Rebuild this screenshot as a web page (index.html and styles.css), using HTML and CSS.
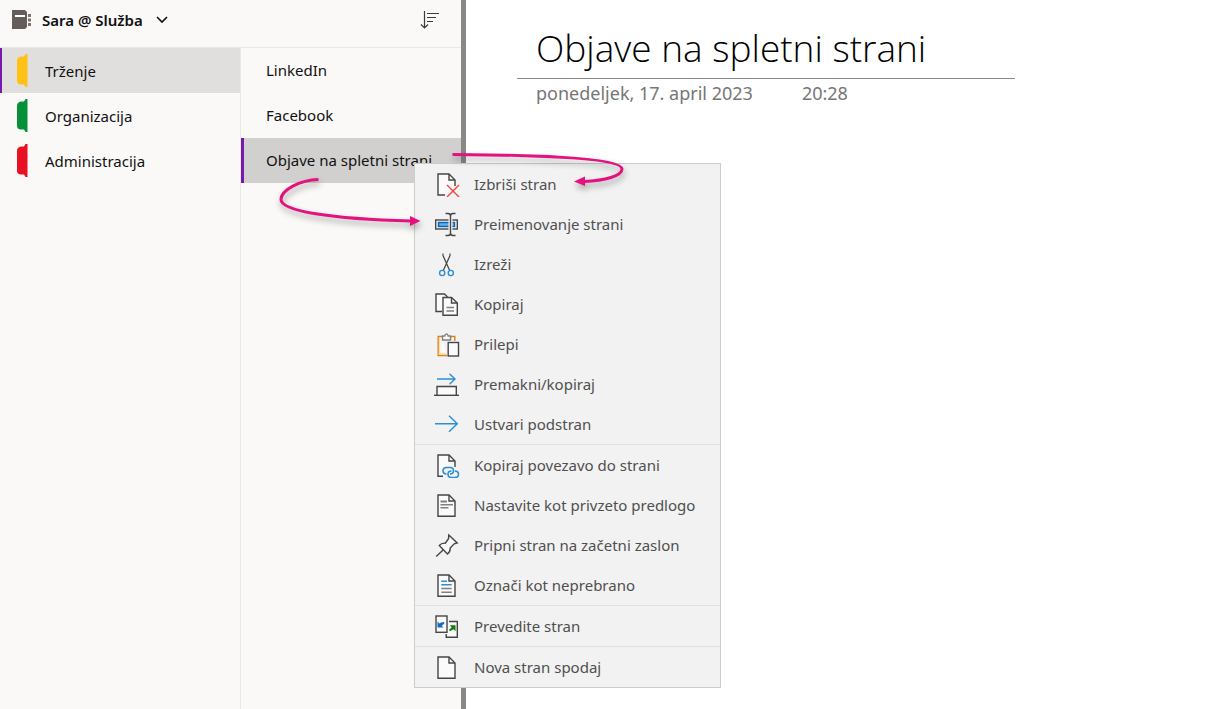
FILE: index.html
```html
<!DOCTYPE html>
<html lang="sl">
<head>
  <meta charset="UTF-8">
  <meta name="viewport" content="width=device-width, initial-scale=1.0">
  <title>Objave na spletni strani</title>
  <link rel="stylesheet" href="styles.css">
</head>
<body>
  <div class="app">
    <aside class="sidebar">
      <header class="sidebar-header">
        <button class="notebook">
          <svg width="20" height="20" viewBox="0 0 20 20">
            <path d="M0 0h13l2 2v15l-2 2H0z" fill="#655d59"/>
            <path d="M3 6h10" stroke="#fff" stroke-width="2"/>
            <path d="M16 5.500h3M16 10h3M16 14.500h3" stroke="#7a736f" stroke-width="3"/>
          </svg>
          <span>Sara @ Služba</span>
          <svg class="chevron" width="12" height="8" viewBox="0 0 12 8">
            <path d="M1 1l5 5 5-5" fill="none" stroke="#111" stroke-width="1.6"/>
          </svg>
        </button>
        <button class="sort" aria-label="Razvrsti">
          <svg width="20" height="20" viewBox="0 0 20 20" fill="none" stroke="#3b3b3b" stroke-width="1.2">
            <path d="M4.500 1v17M1 14.500l3.500 3.500 3.500-3.500M7 3.500h12M7 7.500h9M7 11.500h6"/>
          </svg>
        </button>
      </header>
      <div class="columns">
        <nav class="sections">
          <button class="section active">
            <svg class="tab yellow" width="11" height="33" viewBox="0 0 11 33"><path d="M10.500 0v33H8.500L7 30.500H4Q0 30.500 0 26.500V7Q0 3 4 2.500H7L8.500 0z"/></svg>
            Trženje
          </button>
          <button class="section">
            <svg class="tab green" width="11" height="33" viewBox="0 0 11 33"><path d="M10.500 0v33H8.500L7 30.500H4Q0 30.500 0 26.500V7Q0 3 4 2.500H7L8.500 0z"/></svg>
            Organizacija
          </button>
          <button class="section">
            <svg class="tab red" width="11" height="33" viewBox="0 0 11 33"><path d="M10.500 0v33H8.500L7 30.500H4Q0 30.500 0 26.500V7Q0 3 4 2.500H7L8.500 0z"/></svg>
            Administracija
          </button>
        </nav>
        <nav class="pages">
          <button class="page">LinkedIn</button>
          <button class="page">Facebook</button>
          <button class="page active">Objave na spletni strani</button>
        </nav>
      </div>
    </aside>

    <main class="note">
      <div class="note-header">
        <h1>Objave na spletni strani</h1>
        <p class="date"><span>ponedeljek, 17. april 2023</span><span>20:28</span></p>
      </div>
    </main>

    <div class="menu">
      <div class="group">
        <button class="item">
          <svg class="icon" viewBox="0 0 26 26">
            <path class="paper" d="M11 24H4V3h11l6 6v6"/><path d="M15 3v6h6"/>
            <path class="cross" d="M13 14l12 12M25 14L13 26"/>
          </svg>
          Izbriši stran
        </button>
        <button class="item">
          <svg class="icon" viewBox="0 0 26 26">
            <rect class="paper" x="1.700" y="9" width="21.600" height="9"/>
            <rect x="4.500" y="11.500" width="16" height="4" fill="#69afe5" stroke="#0a64b4" stroke-width="1.500"/>
            <path d="M16.500 3v21" stroke="#f2f2f2" stroke-width="4"/>
            <path d="M11.500 2.500h2.500q2.500 0 2.500 2.500v17q0 2.500-2.500 2.500h-2.500M21.500 2.500h-2.500q-2.500 0-2.500 2.500v17q0 2.500 2.500 2.500h2.500"/>
          </svg>
          Preimenovanje strani
        </button>
        <button class="item">
          <svg class="icon" viewBox="0 0 26 26">
            <path d="M9 2.500v2l6.800 15.300M16 2.500v2L9.200 19.800" stroke-width="1.200"/>
            <g class="blue"><circle cx="8.200" cy="22" r="2.600"/><circle cx="16.800" cy="22" r="2.600"/></g>
          </svg>
          Izreži
        </button>
        <button class="item">
          <svg class="icon" viewBox="0 0 26 26">
            <path class="paper" d="M8 20.500H2V3h8.500l3 3"/>
            <path class="paper" d="M9 6.500h8.500L23.300 12v12.300H9z"/><path d="M17.500 6.500V12h5.800"/>
            <path class="gray" d="M12.500 16.500H20M12.500 20H20"/>
          </svg>
          Kopiraj
        </button>
        <button class="item">
          <svg class="icon" viewBox="0 0 26 26">
            <path class="orange" d="M8 5.500H4.200v19H13M16.500 5.500h4.300V10"/>
            <path d="M5.500 7v16H12" fill="none" stroke="#f8dda6"/>
            <path class="gray paper" d="M8.500 9V5h2.300q.4-2 1.700-2t1.700 2h2.300v4z"/>
            <rect class="paper" x="14.200" y="11.500" width="10.300" height="13.500"/>
          </svg>
          Prilepi
        </button>
        <button class="item">
          <svg class="icon" viewBox="0 0 26 26">
            <path class="blue" d="M3 8h18M15.500 2.800L21 8l-5.500 5.200"/>
            <path class="paper" d="M3 24v-8.500h19.300V24"/><path d="M0 24.300h25"/>
          </svg>
          Premakni/kopiraj
        </button>
        <button class="item">
          <svg class="icon" viewBox="0 0 26 26">
            <path class="blue" d="M1 12.700h22.500M15 4.700l8.300 8-8.300 8"/>
          </svg>
          Ustvari podstran
        </button>
      </div>
      <div class="group">
        <button class="item">
          <svg class="icon" viewBox="0 0 26 26">
            <path class="paper" d="M9 24.300H4V3h11l6 6v6"/><path d="M15 3v6h6"/>
            <rect x="8" y="14" width="14" height="9" rx="4.500" fill="#f2f2f2" stroke="none"/>
            <g class="blue" stroke-width="1.600">
              <path d="M12.500 22q-3.500-.2-3.500-3.200 0-3.300 3.500-3.300h3.700q3.300 0 3.300 3.300 0 3.200-3.500 3.200"/>
              <path d="M20.800 19q3.700.2 3.700 3.200 0 3.300-3.500 3.300h-3.500q-3.500 0-3.500-3.300 0-3.200 3.500-3.200"/>
            </g>
          </svg>
          Kopiraj povezavo do strani
        </button>
        <button class="item">
          <svg class="icon" viewBox="0 0 26 26">
            <path class="paper" d="M4 3h11l6 6v15.300H4z"/><path d="M15 3v6h6"/>
            <path class="gray" d="M6.500 12.700H19M6.500 15.700h8"/><path class="gray" d="M6.500 9.500H13" stroke-width="2"/>
          </svg>
          Nastavite kot privzeto predlogo
        </button>
        <button class="item">
          <svg class="icon" viewBox="0 0 26 26">
            <path class="paper" d="M14.800 3l8.400 8-3 .8-4 4.200q.2 3.700-2.700 6L5.300 13.500q2.200-2.700 6-2.300l3.200-4.500z"/>
            <path d="M9.300 17.700L2.200 24.500"/>
          </svg>
          Pripni stran na začetni zaslon
        </button>
        <button class="item">
          <svg class="icon" viewBox="0 0 26 26">
            <path class="paper" d="M4 3h11l6 6v15.300H4z"/><path d="M15 3v6h6"/>
            <path class="blue" d="M7.300 9.300H13M7.300 12.700h10.400"/><path class="gray" d="M7.300 16.500h10.400M7.300 20.300h10.400"/>
          </svg>
          Označi kot neprebrano
        </button>
      </div>
      <div class="group">
        <button class="item">
          <svg class="icon" viewBox="0 0 26 26">
            <path class="paper" d="M15 8.500h8.300v15.700H12.200V21"/>
            <rect class="paper" x="2" y="3" width="11" height="16.300"/>
            <path d="M3.500 8.500v6h6l-1.800-1.800 2.500-2V9L7 9.500 5.500 10.500z" fill="#0f6cc4" stroke="none"/>
            <path d="M21.500 12.300v6l-2-2-3.500 2-1-1.500 2.700-2.300-2-2.200z" fill="#107c10" stroke="none"/>
          </svg>
          Prevedite stran
        </button>
      </div>
      <div class="group">
        <button class="item">
          <svg class="icon" viewBox="0 0 26 26">
            <path class="paper" d="M4 3h11l6 6v15.300H4z"/><path d="M15 3v6h6"/>
          </svg>
          Nova stran spodaj
        </button>
      </div>
    </div>

    <!-- puščici do menija -->
    <svg class="arrows" width="380" height="100" viewBox="260 140 380 100">
      <path class="line" d="M452.500 154.500C520 155 622 157 622 169C622 176 605 180.500 584 181.500"/>
      <path class="head" d="M574 181.500l11-5v9.500z"/>
      <path class="line" d="M318.500 179.500C300 180 281 190 281 199.500C281 211 330 219 411 221"/>
      <path class="head" d="M420.500 221l-10.500-5v10z"/>
    </svg>
  </div>
</body>
</html>
```
FILE: styles.css
```css
* {
  box-sizing: border-box;
}

body {
  margin: 0;
  font-family: "Noto Sans", "Open Sans", sans-serif;
  font-size: 15px;
  color: #111;
  background-color: #fff;
}

button {
  border: none;
  margin: 0;
  padding: 0;
  background: none;
  font: inherit;
  color: inherit;
  text-align: left;
  cursor: pointer;
}

.app {
  position: relative;
  display: flex;
  min-height: 100vh;
}

/* sidebar */
.sidebar {
  display: flex;
  flex-direction: column;
  flex: none;
  width: 466px;
  background-color: #faf9f8;
  border-right: 5px solid #8a8886;
}

.sidebar-header {
  display: flex;
  align-items: center;
  justify-content: space-between;
  height: 48px;
  padding: 0 21px 7px 12px;
  border-bottom: 1px solid #e9e8e7;
}

.notebook {
  display: flex;
  align-items: center;
  gap: 10px;
  font-weight: 600;
}

.chevron {
  margin-left: 3px;
}

.sort svg {
  display: block;
}

.columns {
  display: flex;
  flex: 1;
}

.sections {
  width: 240px;
}

.pages {
  flex: 1;
  border-left: 1px solid #e9e8e7;
}

.section,
.page {
  display: flex;
  align-items: center;
  width: 100%;
  height: 45px;
}

.section {
  gap: 17px;
  padding-left: 15px;
  border-left: 2px solid transparent;
}

.section.active {
  background-color: #e1dfdd;
  border-color: #7719aa;
}

.page {
  padding: 0 0 2px 22px;
  border-left: 3px solid transparent;
}

.page.active {
  background-color: #d2d0ce;
  border-color: #7719aa;
}

.yellow {
  fill: #ffc116;
}

.green {
  fill: #069038;
}

.red {
  fill: #e81123;
}

/* note */
.note {
  flex: 1;
  padding: 20px 51px;
}

.note-header {
  max-width: 498px;
}

.note h1 {
  margin: 0;
  padding: 0 19px;
  height: 59px;
  border-bottom: 1px solid #8a8a8a;
  font-family: "Open Sans", "Noto Sans", sans-serif;
  font-size: 37px;
  font-weight: 300;
  line-height: 56px;
  white-space: nowrap;
  color: #000;
}

.date {
  display: flex;
  gap: 49px;
  margin: 0;
  padding: 0 19px;
  font-size: 18px;
  line-height: 28px;
  color: #767676;
}

/* context menu */
.menu {
  position: absolute;
  top: 163px;
  left: 414px;
  width: 307px;
  background-color: #f2f2f2;
  border: 1px solid #cccccc;
  color: #4f4f4f;
}

.group + .group {
  border-top: 1px solid #e0e0e0;
}

.item {
  display: flex;
  align-items: center;
  gap: 14px;
  width: 100%;
  height: 40px;
  padding-left: 19px;
  white-space: nowrap;
}

.icon {
  width: 26px;
  height: 26px;
  fill: none;
  stroke: #454545;
  stroke-width: 1.4;
}

.paper {
  fill: #fafafa;
}

.blue {
  stroke: #2b8fd6;
}

.gray {
  stroke: #808080;
}

.orange {
  fill: #fafafa;
  stroke: #e07f10;
}

.cross {
  stroke: #ee4540;
}

/* arrows */
.arrows {
  position: absolute;
  top: 140px;
  left: 260px;
  pointer-events: none;
  filter: drop-shadow(1px 4px 3px rgba(0, 0, 0, 0.35));
}

.line {
  fill: none;
  stroke: #e3127e;
  stroke-width: 3;
}

.head {
  fill: #e3127e;
}
```
